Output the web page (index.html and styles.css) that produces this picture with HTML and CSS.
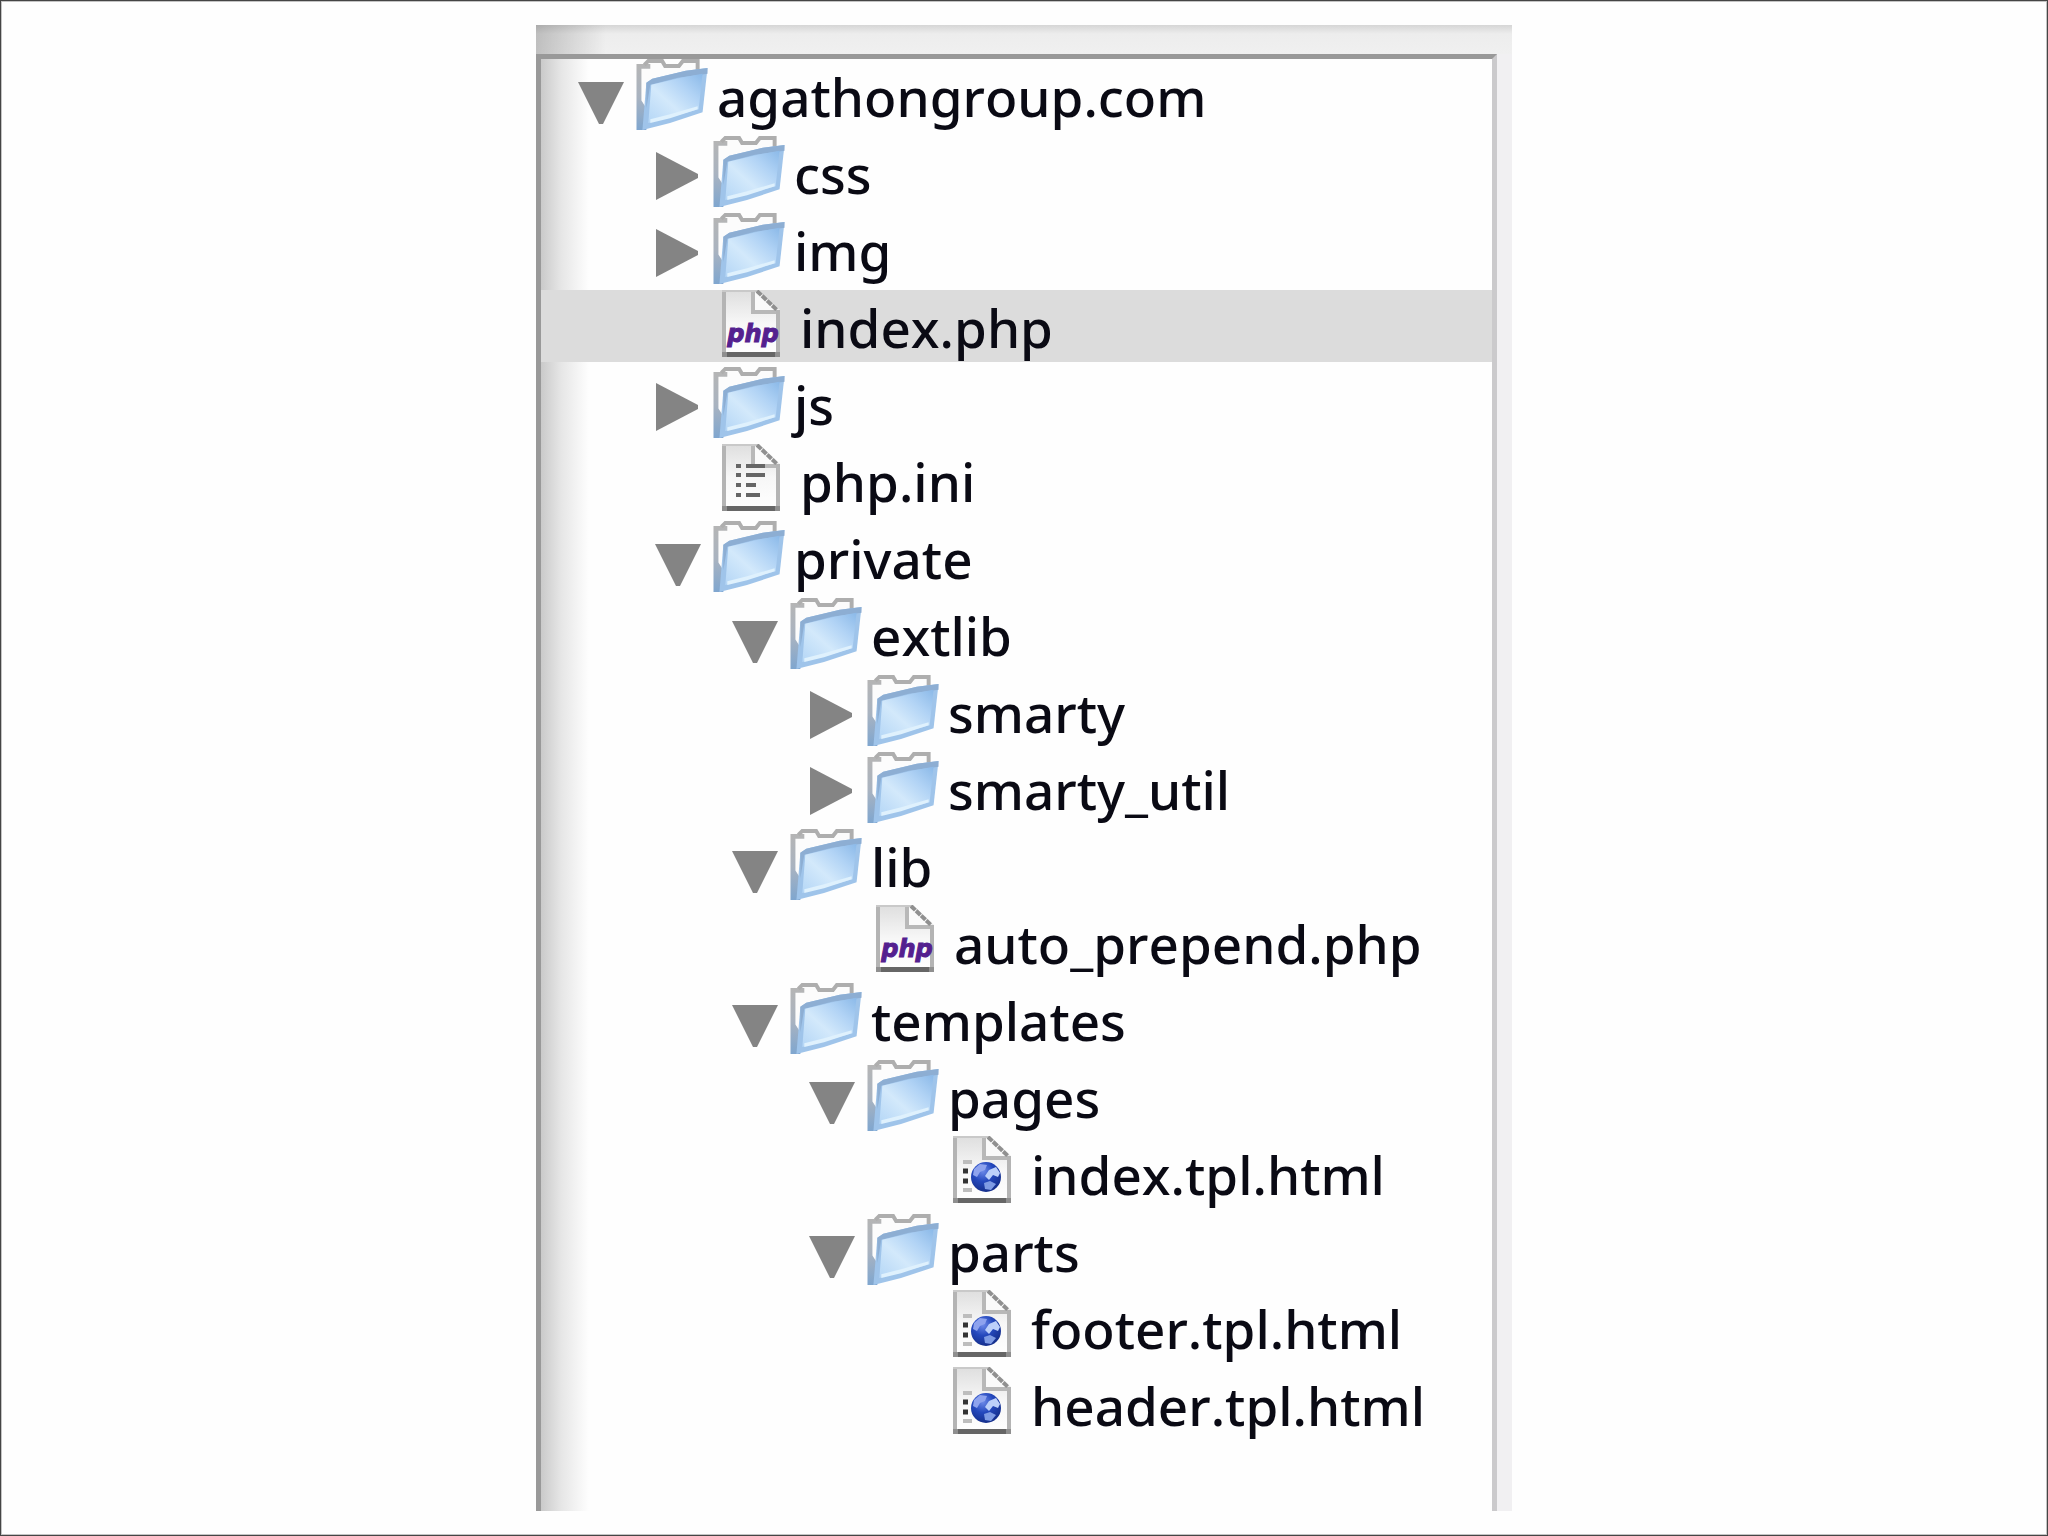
FILE: index.html
```html
<!DOCTYPE html>
<html lang="en">
<head>
  <meta charset="UTF-8" />
  <meta name="viewport" content="width=device-width, initial-scale=1.0"/>
  <title>agathongroup.com</title>
  <link rel="stylesheet" href="styles.css">
</head>
<body>
  <!-- shared icons -->
  <svg class="sprite" width="0" height="0" aria-hidden="true">
    <defs>
      <linearGradient id="folder-front" x1="0" y1="1" x2="1" y2="0">
        <stop offset="0" stop-color="#b4d6f6"/>
        <stop offset="0.4" stop-color="#d3e9fb"/>
        <stop offset="0.7" stop-color="#b1d3f5"/>
        <stop offset="1" stop-color="#8bb9e8"/>
      </linearGradient>
      <linearGradient id="folder-side" x1="0" y1="0" x2="0" y2="1">
        <stop offset="0" stop-color="#b5b5b5"/>
        <stop offset="0.5" stop-color="#a9b3c0"/>
        <stop offset="1" stop-color="#7fa6cf"/>
      </linearGradient>
      <linearGradient id="paper" x1="0" y1="0" x2="0" y2="1">
        <stop offset="0" stop-color="#dedede"/>
        <stop offset="0.5" stop-color="#f7f7f7"/>
        <stop offset="1" stop-color="#ffffff"/>
      </linearGradient>
      <radialGradient id="globe" cx="0.4" cy="0.3" r="0.7">
        <stop offset="0" stop-color="#6d8ae8"/>
        <stop offset="0.5" stop-color="#2448bd"/>
        <stop offset="1" stop-color="#152f8c"/>
      </radialGradient>
    </defs>

    <symbol id="arrow-down" viewBox="0 0 52 52">
      <path d="M3 9H49L28 51H24Z" fill="#848484"/>
    </symbol>

    <symbol id="arrow-right" viewBox="0 0 52 52">
      <path d="M4 2L46 24V28L4 50Z" fill="#848484"/>
    </symbol>

    <symbol id="folder" viewBox="0 0 72 72">
      <path d="M2 72V7H8L11 2H27L30 7H43L47 2H62V20L58 56L10 70Z" fill="#fcfcfc"/>
      <path d="M0 5H14V10H5V42L10 50V72H0Z" fill="url(#folder-side)"/>
      <path d="M8 6L12 2H26L29 7H43L47 2H62V12" fill="none" stroke="#aeaeae" stroke-width="4"/>
      <path d="M10 24L16 20L50 12L72 9L67 54L34 65L6 72Z" fill="#9fc4ea"/>
      <path d="M10 24L16 20L50 12L72 9V15L42 19L14 26L10 50Z" fill="#8daed3"/>
      <path d="M15 26L45 19L67 15L63 51L12 65Z" fill="url(#folder-front)"/>
      <path d="M14 61L34 56L62 48V51L34 60L14 65Z" fill="#dff1fd"/>
    </symbol>

    <symbol id="page" viewBox="0 0 58 67">
      <path d="M0 0H37L58 20V67H0Z" fill="url(#paper)"/>
      <path d="M2 0V65M56 20V65" fill="none" stroke="#b4b4b4" stroke-width="4"/>
      <path d="M0 1H37" stroke="#c9c9c9" stroke-width="2"/>
      <path d="M32 2H37L54 19V22H32Z" fill="#fafafa"/>
      <path d="M31 2V22H54" fill="none" stroke="#b8b8b8" stroke-width="4"/>
      <path d="M35 1L55 20" stroke="#909090" stroke-width="4" stroke-dasharray="6 1"/>
      <path d="M0 62H58V67H0Z" fill="#8f8f8f"/>
      <path d="M5 62H53V67H5Z" fill="#666666"/>
    </symbol>

    <symbol id="page-text" viewBox="0 0 58 67">
      <use href="#page" width="58" height="67"/>
      <path d="M14 22H19M24 22H43M14 31H19M24 31H43M14 41H19M24 41H34M14 51H19M24 51H38" stroke="#666666" stroke-width="4"/>
    </symbol>

    <symbol id="page-html" viewBox="0 0 58 67">
      <use href="#page" width="58" height="67"/>
      <path d="M10 26H19M10 54H19" stroke="#bdbdbd" stroke-width="4"/>
      <path d="M10 35H15M10 45H15" stroke="#333333" stroke-width="5"/>
      <circle cx="33" cy="41" r="15" fill="url(#globe)"/>
      <path d="M21 33L27 28L34 29L32 34L27 36L24 41L20 39Z" fill="#8ea3ee"/>
      <path d="M36 34L43 31L47 37L45 41L40 39L36 44L32 40Z" fill="#bcd0fa"/>
      <path d="M31 47L37 45L43 48L38 54L32 53Z" fill="#7e9be4"/>
    </symbol>
  </svg>

  <main class="panel">
    <div class="panel-header"></div>
    <div class="panel-body">
      <ul class="tree" aria-label="Files">
        <li class="row level-0">
          <button class="toggle" aria-label="Collapse agathongroup.com" aria-expanded="true"><svg class="arrow"><use href="#arrow-down"/></svg></button>
          <svg class="folder"><use href="#folder"/></svg>
          <span class="name">agathongroup.com</span>
        </li>
        <li class="row level-1">
          <button class="toggle" aria-label="Expand css" aria-expanded="false"><svg class="arrow"><use href="#arrow-right"/></svg></button>
          <svg class="folder"><use href="#folder"/></svg>
          <span class="name">css</span>
        </li>
        <li class="row level-1">
          <button class="toggle" aria-label="Expand img" aria-expanded="false"><svg class="arrow"><use href="#arrow-right"/></svg></button>
          <svg class="folder"><use href="#folder"/></svg>
          <span class="name">img</span>
        </li>
        <li class="row level-1 file selected">
          <svg class="page" viewBox="0 0 58 67">
            <use href="#page" width="58" height="67"/>
            <text x="31" y="52" class="php-mark">php</text>
          </svg>
          <span class="name">index.php</span>
        </li>
        <li class="row level-1">
          <button class="toggle" aria-label="Expand js" aria-expanded="false"><svg class="arrow"><use href="#arrow-right"/></svg></button>
          <svg class="folder"><use href="#folder"/></svg>
          <span class="name">js</span>
        </li>
        <li class="row level-1 file">
          <svg class="page"><use href="#page-text"/></svg>
          <span class="name">php.ini</span>
        </li>
        <li class="row level-1">
          <button class="toggle" aria-label="Collapse private" aria-expanded="true"><svg class="arrow"><use href="#arrow-down"/></svg></button>
          <svg class="folder"><use href="#folder"/></svg>
          <span class="name">private</span>
        </li>
        <li class="row level-2">
          <button class="toggle" aria-label="Collapse extlib" aria-expanded="true"><svg class="arrow"><use href="#arrow-down"/></svg></button>
          <svg class="folder"><use href="#folder"/></svg>
          <span class="name">extlib</span>
        </li>
        <li class="row level-3">
          <button class="toggle" aria-label="Expand smarty" aria-expanded="false"><svg class="arrow"><use href="#arrow-right"/></svg></button>
          <svg class="folder"><use href="#folder"/></svg>
          <span class="name">smarty</span>
        </li>
        <li class="row level-3">
          <button class="toggle" aria-label="Expand smarty_util" aria-expanded="false"><svg class="arrow"><use href="#arrow-right"/></svg></button>
          <svg class="folder"><use href="#folder"/></svg>
          <span class="name">smarty_util</span>
        </li>
        <li class="row level-2">
          <button class="toggle" aria-label="Collapse lib" aria-expanded="true"><svg class="arrow"><use href="#arrow-down"/></svg></button>
          <svg class="folder"><use href="#folder"/></svg>
          <span class="name">lib</span>
        </li>
        <li class="row level-3 file">
          <svg class="page" viewBox="0 0 58 67">
            <use href="#page" width="58" height="67"/>
            <text x="31" y="52" class="php-mark">php</text>
          </svg>
          <span class="name">auto_prepend.php</span>
        </li>
        <li class="row level-2">
          <button class="toggle" aria-label="Collapse templates" aria-expanded="true"><svg class="arrow"><use href="#arrow-down"/></svg></button>
          <svg class="folder"><use href="#folder"/></svg>
          <span class="name">templates</span>
        </li>
        <li class="row level-3">
          <button class="toggle" aria-label="Collapse pages" aria-expanded="true"><svg class="arrow"><use href="#arrow-down"/></svg></button>
          <svg class="folder"><use href="#folder"/></svg>
          <span class="name">pages</span>
        </li>
        <li class="row level-4 file">
          <svg class="page"><use href="#page-html"/></svg>
          <span class="name">index.tpl.html</span>
        </li>
        <li class="row level-3">
          <button class="toggle" aria-label="Collapse parts" aria-expanded="true"><svg class="arrow"><use href="#arrow-down"/></svg></button>
          <svg class="folder"><use href="#folder"/></svg>
          <span class="name">parts</span>
        </li>
        <li class="row level-4 file">
          <svg class="page"><use href="#page-html"/></svg>
          <span class="name">footer.tpl.html</span>
        </li>
        <li class="row level-4 file">
          <svg class="page"><use href="#page-html"/></svg>
          <span class="name">header.tpl.html</span>
        </li>
      </ul>
    </div>
  </main>
</body>
</html>
```

FILE: styles.css
```css
* {
  margin: 0;
  padding: 0;
  box-sizing: border-box;
}

body {
  display: flex;
  justify-content: center;
  min-height: 100vh;
  padding: 24px;
  border: 1px solid #454545;
  box-shadow: inset 0 0 0 1px #c4c4c4;
  background-color: #fefefe;
  color: #0a0a14;
  font-family: "Noto Sans", "Open Sans", sans-serif;
  font-size: 53px;
  font-weight: 500;
  font-kerning: none;
  line-height: 67px;
}

.sprite {
  position: absolute;
}

.panel {
  display: flex;
  flex-direction: column;
  width: 976px;
  max-width: 100%;
  background-color: #f1f0f2;
}

.panel-header {
  height: 29px;
  background-image:
    linear-gradient(to right, rgba(0, 0, 0, 0.2), transparent 70px),
    linear-gradient(to bottom, #d6d6d6, #ededed 9px, #f0f0f0);
}

.panel-body {
  display: grid;
  flex: 1;
  margin-right: 15px;
  padding-bottom: 72px;
  border: 5px solid #999;
  border-right-color: #cbcacc;
  border-bottom: none;
  background: #fefefe linear-gradient(to right, #cacaca, #e6e6e6 20px, #fefefe 48px);
}

.tree {
  display: grid;
  grid-auto-rows: 1fr;
  gap: 5px;
  list-style: none;
}

.row {
  display: flex;
  align-items: center;
  gap: 9px;
}

.level-0 {
  padding-left: 33px;
}

.level-1 {
  padding-left: 110px;
}

.level-2 {
  padding-left: 187px;
}

.level-3 {
  padding-left: 264px;
}

.level-4 {
  padding-left: 341px;
}

/* files have no toggle, so pad their icon to the folder column */
.file {
  gap: 20px;
}

.file .page {
  margin-left: 71px;
}

.selected {
  background-color: #dcdcdc;
}

.toggle {
  display: flex;
  align-items: center;
  justify-content: center;
  width: 53px;
  height: 60px;
  padding-top: 8px;
  border: none;
  background: none;
  cursor: pointer;
}

.toggle svg,
.folder,
.page {
  flex-shrink: 0;
}

.arrow {
  width: 52px;
  height: 52px;
}

.folder {
  width: 72px;
  height: 71px;
}

.page {
  width: 58px;
  height: 67px;
  align-self: flex-start;
}

.php-mark {
  fill: #54208f;
  stroke: #54208f;
  stroke-width: 1px;
  font-family: "DejaVu Sans", sans-serif;
  font-size: 24px;
  font-style: italic;
  font-weight: bold;
  text-anchor: middle;
}

.name {
  padding-top: 4px;
  white-space: nowrap;
}
```
